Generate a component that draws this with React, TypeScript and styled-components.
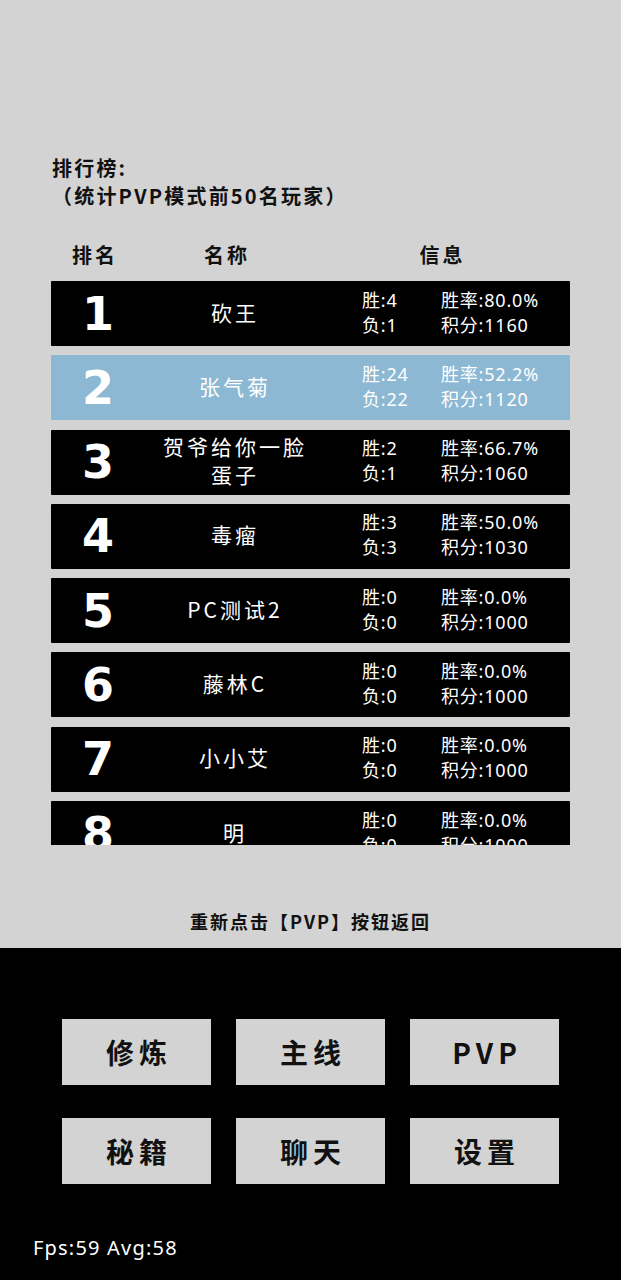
import React from 'react';
import styled, { createGlobalStyle } from 'styled-components';

const GlobalStyle = createGlobalStyle`
  html, body {
    margin: 0;
    padding: 0;
    background: #000;
  }
  body {
    font-family: "Noto Sans CJK SC", "Noto Sans", sans-serif;
  }
`;

interface IPlayer {
  rank: number;
  name: string;
  win: number;
  lose: number;
  rate: string;
  score: number;
}

const players: IPlayer[] = [
  { rank: 1, name: '砍王', win: 4, lose: 1, rate: '80.0%', score: 1160 },
  { rank: 2, name: '张气菊', win: 24, lose: 22, rate: '52.2%', score: 1120 },
  { rank: 3, name: '贺爷给你一脸蛋子', win: 2, lose: 1, rate: '66.7%', score: 1060 },
  { rank: 4, name: '毒瘤', win: 3, lose: 3, rate: '50.0%', score: 1030 },
  { rank: 5, name: 'PC测试2', win: 0, lose: 0, rate: '0.0%', score: 1000 },
  { rank: 6, name: '藤林C', win: 0, lose: 0, rate: '0.0%', score: 1000 },
  { rank: 7, name: '小小艾', win: 0, lose: 0, rate: '0.0%', score: 1000 },
  { rank: 8, name: '明', win: 0, lose: 0, rate: '0.0%', score: 1000 },
];

const menu = ['修炼', '主线', 'PVP', '秘籍', '聊天', '设置'];

const Page = styled.div`
  width: 621px;
  height: 1280px;
  display: flex;
  flex-direction: column;
`;

const Board = styled.div`
  height: 948px;
  background: #d3d3d3;
  padding: 154px 51px 0;
  box-sizing: border-box;
  display: flex;
  flex-direction: column;
`;

const Title = styled.div`
  font-size: 20px;
  line-height: 28px;
  font-weight: 700;
  color: #111;
  padding-left: 1px;
  letter-spacing: 2.2px;
`;

const HeaderRow = styled.div`
  display: grid;
  grid-template-columns: 88px 176px 1fr;
  margin-top: 31px;
  height: 28px;
  line-height: 28px;
  font-size: 20px;
  font-weight: 700;
  color: #111;
  letter-spacing: 3px;
  margin-bottom: 12px;
`;

const HeadCell = styled.div`
  text-align: center;
`;

const List = styled.div`
  height: 564px;
  overflow: hidden;
  display: flex;
  flex-direction: column;
  gap: 9.3px;
`;

const Row = styled.div<{ $active?: boolean }>`
  flex: 0 0 65px;
  display: grid;
  grid-template-columns: 92px 184px 35px 79px 1fr;
  align-items: center;
  background: ${p => (p.$active ? '#8db8d4' : '#000')};
  color: #fff;
  border-radius: 1px;
`;

const Rank = styled.div`
  font-family: "DejaVu Sans", sans-serif;
  font-weight: 700;
  font-size: 46px;
  text-align: center;
  padding-left: 2px;
  line-height: 1;
`;

const Name = styled.div`
  font-size: 21px;
  line-height: 28px;
  letter-spacing: 3px;
  text-align: center;
  padding: 0 18px 4px;
`;

const Info = styled.div`
  font-size: 18px;
  line-height: 25px;
  white-space: nowrap;
  letter-spacing: 0.8px;
  font-family: "Noto Sans", "Noto Sans CJK SC", sans-serif;
  padding-bottom: 2px;
`;

const Note = styled.div`
  margin-top: 62px;
  text-align: center;
  font-size: 18px;
  line-height: 28px;
  font-weight: 700;
  color: #111;
  letter-spacing: 2px;
`;

const Dock = styled.div`
  flex: 1;
  background: #000;
  padding-top: 71px;
  display: flex;
  flex-direction: column;
`;

const Grid = styled.div`
  display: grid;
  grid-template-columns: repeat(3, 149px);
  column-gap: 25px;
  row-gap: 33px;
  justify-content: center;
`;

const MenuButton = styled.button`
  height: 66px;
  border: none;
  border-radius: 0;
  background: #d3d3d3;
  color: #111;
  font-family: "Noto Sans CJK SC", "Noto Sans", sans-serif;
  font-size: 28px;
  font-weight: 700;
  letter-spacing: 5px;
  padding: 0 0 0 5px;
`;

const Fps = styled.div`
  margin-top: 50px;
  padding-left: 33px;
  color: #fff;
  font-family: "Noto Sans", sans-serif;
  font-size: 20px;
  letter-spacing: 1.2px;
  line-height: 28px;
`;

export default function App() {
  return (
    <Page>
      <GlobalStyle />
      <Board>
        <Title>
          排行榜:
          <br />
          （统计PVP模式前50名玩家）
        </Title>
        <HeaderRow>
          <HeadCell>排名</HeadCell>
          <HeadCell>名称</HeadCell>
          <HeadCell>信息</HeadCell>
        </HeaderRow>
        <List>
          {players.map(p => (
            <Row key={p.rank} $active={p.rank === 2}>
              <Rank>{p.rank}</Rank>
              <Name>{p.name}</Name>
              <div />
              <Info>
                胜:{p.win}
                <br />
                负:{p.lose}
              </Info>
              <Info>
                胜率:{p.rate}
                <br />
                积分:{p.score}
              </Info>
            </Row>
          ))}
        </List>
        <Note>重新点击【PVP】按钮返回</Note>
      </Board>
      <Dock>
        <Grid>
          {menu.map(m => (
            <MenuButton key={m}>{m}</MenuButton>
          ))}
        </Grid>
        <Fps>Fps:59 Avg:58</Fps>
      </Dock>
    </Page>
  );
}
